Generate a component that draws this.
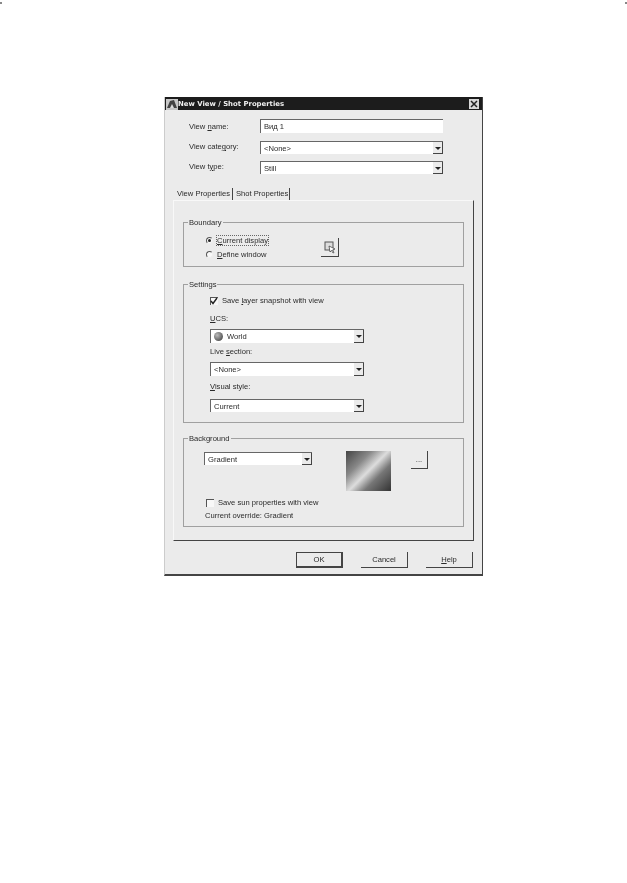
<script lang="ts">
</script>

<div class="page">
  <span class="speck tl"></span>
  <span class="speck tr"></span>
  <div class="dialog">
    <div class="titlebar">
      <svg class="app-icon" viewBox="0 0 12 12" width="12" height="12">
        <rect x="0" y="1" width="12" height="11" fill="#c8c8c8" />
        <path d="M1 10 L4 3 L8 2 L11 10 Z" fill="#444" />
        <path d="M4 10 L6 6 L8 10 Z" fill="#ddd" />
      </svg>
      <span class="title">New View / Shot Properties</span>
      <span class="close">
        <svg viewBox="0 0 8 8" width="8" height="8"><path d="M1 1 L7 7 M7 1 L1 7" stroke="#222" stroke-width="1.5" /></svg>
      </span>
    </div>

    <div class="top-form">
      <div class="row first">
        <span class="lbl">View <u>n</u>ame:</span>
        <div class="field name">Вид 1</div>
      </div>
      <div class="row">
        <span class="lbl">View cate<u>g</u>ory:</span>
        <div class="combo name"><span>&lt;None&gt;</span><i class="arrow"></i></div>
      </div>
      <div class="row">
        <span class="lbl">View t<u>y</u>pe:</span>
        <div class="combo name"><span>Still</span><i class="arrow"></i></div>
      </div>
    </div>

    <div class="tabs">
      <span class="tab active">View Properties</span>
      <span class="tab">Shot Properties</span>
    </div>

    <div class="panel">
      <section class="group boundary">
        <span class="legend">Boundary</span>
        <div class="boundary-row">
          <div class="radios">
            <div class="opt"><i class="radio on"></i><span class="focus"><u>C</u>urrent display</span></div>
            <div class="opt"><i class="radio"></i><span><u>D</u>efine window</span></div>
          </div>
          <button class="btn pick" aria-label="Define window">
            <svg viewBox="0 0 14 14" width="14" height="14">
              <rect x="2" y="2" width="8" height="8" fill="#ddd" stroke="#555" />
              <path d="M6 6 L12 9 L9.5 10 L11 12.5 L10 13 L8.5 10.5 L7 12 Z" fill="#fff" stroke="#333" stroke-width="0.7" />
            </svg>
          </button>
        </div>
      </section>

      <section class="group settings">
        <span class="legend">Settings</span>
        <div class="opt check-line">
          <i class="check">
            <svg viewBox="0 0 8 8" width="8" height="8"><path d="M1 4 L3 6.5 L7 1" fill="none" stroke="#222" stroke-width="1.4" /></svg>
          </i>
          <span>Save <u>l</u>ayer snapshot with view</span>
        </div>
        <div class="lbl sub ucs"><u>U</u>CS:</div>
        <div class="combo wide">
          <span class="globe"></span><span>World</span><i class="arrow"></i>
        </div>
        <div class="lbl sub live">Live <u>s</u>ection:</div>
        <div class="combo wide"><span>&lt;None&gt;</span><i class="arrow"></i></div>
        <div class="lbl sub visual"><u>V</u>isual style:</div>
        <div class="combo wide last"><span>Current</span><i class="arrow"></i></div>
      </section>

      <section class="group background">
        <span class="legend">Background</span>
        <div class="bg-row">
          <div class="combo bg"><span>Gradient</span><i class="arrow"></i></div>
          <div class="swatch"></div>
          <button class="btn dots">...</button>
        </div>
        <div class="opt sun"><i class="check"></i><span>Save sun properties with view</span></div>
        <div class="override">Current override: Gradient</div>
      </section>
    </div>

    <div class="actions">
      <button class="btn action default">OK</button>
      <button class="btn action">Cancel</button>
      <button class="btn action"><u>H</u>elp</button>
    </div>
  </div>
</div>

<style>
  :global(body) {
    margin: 0;
    background: #fff;
  }
  .page {
    position: relative;
    width: 627px;
    height: 883px;
    box-sizing: border-box;
    padding: 97px 0 0 164px;
    overflow: hidden;
    font-family: "Liberation Sans", Arial, sans-serif;
    font-size: 7.6px;
    color: #2a2a2a;
  }
  .speck {
    position: absolute;
    top: 2px;
    width: 2px;
    height: 2px;
    background: #888;
  }
  .speck.tl { left: 0; }
  .speck.tr { right: 0; }
  .dialog {
    width: 319px;
    height: 479px;
    box-sizing: border-box;
    display: flex;
    flex-direction: column;
    background: #ebebeb;
    border-right: 1px solid #444;
    border-bottom: 2px solid #444;
    border-left: 1px solid #ccc;
    filter: blur(0.5px);
  }
  .titlebar {
    height: 13px;
    display: flex;
    align-items: center;
    background: #1c1c1c;
    padding: 0 3px 0 1px;
  }
  .title {
    flex: 1;
    font-family: "DejaVu Sans", sans-serif;
    font-weight: 700;
    font-size: 6.9px;
    color: #f0f0f0;
    white-space: nowrap;
  }
  .close {
    width: 10px;
    height: 10px;
    display: flex;
    align-items: center;
    justify-content: center;
    background: #d8d8d8;
  }
  .top-form {
    display: flex;
    flex-direction: column;
    gap: 7px;
    padding: 9px 0 0 24px;
  }
  .row {
    display: flex;
    align-items: center;
    height: 13px;
  }
  .row .lbl {
    width: 71px;
    margin-top: -2px;
  }
  .row.first {
    height: 14px;
    margin-bottom: 1px;
  }
  .row.first .lbl {
    margin-top: 0;
  }
  u {
    text-underline-offset: 1px;
  }
  .field,
  .combo {
    box-sizing: border-box;
    display: flex;
    align-items: center;
    background: #fff;
    border-top: 1px solid #666;
    border-left: 1px solid #666;
    padding-left: 3px;
    white-space: nowrap;
  }
  .field.name,
  .combo.name {
    width: 183px;
    height: 100%;
  }
  .arrow {
    margin-left: auto;
    width: 10px;
    height: 100%;
    flex: none;
    position: relative;
    background: #ebebeb;
    border-right: 1px solid #444;
    border-bottom: 1px solid #444;
    box-sizing: border-box;
  }
  .arrow::after {
    content: "";
    position: absolute;
    left: 2px;
    top: 5px;
    border-left: 3px solid transparent;
    border-right: 3px solid transparent;
    border-top: 3px solid #222;
  }
  .tabs {
    display: flex;
    align-items: flex-end;
    height: 17px;
    margin: 9px 0 0 12px;
  }
  .tab {
    height: 12px;
    line-height: 11px;
    padding-left: 3px;
    box-sizing: border-box;
    border-right: 1px solid #444;
    white-space: nowrap;
  }
  .tab.active {
    width: 56px;
    padding-left: 0;
  }
  .tab:not(.active) {
    width: 57px;
  }
  .panel {
    width: 301px;
    height: 341px;
    box-sizing: border-box;
    margin-left: 8px;
    padding: 21px 9px 0 9px;
    border-right: 1.5px solid #444;
    border-bottom: 1.5px solid #444;
    border-left: 1px solid #f8f8f8;
    border-top: 1px solid #f8f8f8;
    display: flex;
    flex-direction: column;
  }
  .group {
    position: relative;
    box-sizing: border-box;
    width: 281px;
    border: 1px solid #a0a0a0;
    flex: none;
  }
  .legend {
    position: absolute;
    top: -6px;
    left: 4px;
    padding: 0 1px;
    background: #ebebeb;
    line-height: 11px;
  }
  .boundary {
    height: 45px;
  }
  .boundary-row {
    display: flex;
    padding: 12px 0 0 22px;
  }
  .radios {
    display: flex;
    flex-direction: column;
    gap: 3px;
    width: 115px;
  }
  .opt {
    display: flex;
    align-items: center;
    gap: 4px;
    height: 11px;
    white-space: nowrap;
  }
  .radio {
    width: 7px;
    height: 7px;
    border-radius: 50%;
    box-sizing: border-box;
    border: 1px solid;
    border-color: #555 #eee #eee #555;
    background: #f8f8f8;
    flex: none;
    position: relative;
  }
  .radio.on::after {
    content: "";
    position: absolute;
    left: 1px;
    top: 1px;
    width: 3px;
    height: 3px;
    border-radius: 50%;
    background: #222;
  }
  .focus {
    outline: 1px dotted #666;
  }
  .btn {
    padding: 0;
    font: inherit;
    color: inherit;
    box-sizing: border-box;
    background: #ebebeb;
    border: 0;
    border-right: 1px solid #444;
    border-bottom: 1px solid #444;
    display: flex;
    align-items: center;
    justify-content: center;
  }
  .btn.pick {
    width: 18px;
    height: 19px;
    margin-top: 3px;
  }
  .settings {
    height: 139px;
    margin-top: 17px;
    padding: 10px 0 0 26px;
  }
  .check {
    width: 8px;
    height: 8px;
    box-sizing: border-box;
    background: #f8f8f8;
    border-top: 1px solid #555;
    border-left: 1px solid #555;
    flex: none;
    display: flex;
  }
  .check svg {
    margin: -1px 0 0 -1px;
  }
  .check-line {
    gap: 4px;
  }
  .sub {
    height: 11px;
    line-height: 11px;
  }
  .sub.ucs {
    margin-top: 7px;
  }
  .sub.live {
    margin-top: 3px;
  }
  .sub.visual {
    margin-top: 5px;
  }
  .combo.wide {
    width: 154px;
    height: 14px;
    margin-top: 5px;
  }
  .combo.wide.last {
    margin-top: 7px;
    height: 13px;
  }
  .globe {
    width: 9px;
    height: 9px;
    border-radius: 50%;
    margin-right: 4px;
    background: radial-gradient(circle at 35% 35%, #bbb, #333);
  }
  .background {
    height: 89px;
    margin-top: 15px;
    padding: 13px 0 0 20px;
  }
  .bg-row {
    display: flex;
    align-items: flex-start;
    height: 42px;
  }
  .combo.bg {
    width: 108px;
    height: 13px;
  }
  .swatch {
    width: 45px;
    height: 40px;
    margin-left: 34px;
    margin-top: -1px;
    background: linear-gradient(135deg, #444 0%, #888 30%, #ddd 50%, #777 68%, #333 100%);
  }
  .dots {
    width: 17px;
    height: 18px;
    margin-left: 20px;
    margin-top: -1px;
  }
  .sun {
    margin: 3px 0 0 2px;
  }
  .override {
    margin: 2px 0 0 1px;
    line-height: 11px;
  }
  .actions {
    display: flex;
    justify-content: flex-end;
    gap: 18px;
    padding: 11px 9px 0 0;
  }
  .action {
    width: 47px;
    height: 16px;
  }
  .action.default {
    border: 1px solid #444;
    border-right-width: 2px;
    border-bottom-width: 2px;
  }
</style>
